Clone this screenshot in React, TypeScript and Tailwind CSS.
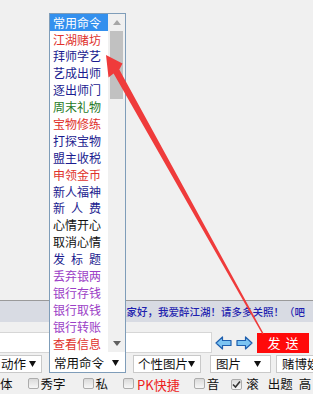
import React from "react";

const menuItems = [
  { t: "常用命令", c: "text-white", active: true },
  { t: "江湖赌坊", c: "text-[#e0322c]" },
  { t: "拜师学艺", c: "text-[#1b1b8f]" },
  { t: "艺成出师", c: "text-[#1b1b8f]" },
  { t: "逐出师门", c: "text-[#1b1b8f]" },
  { t: "周末礼物", c: "text-[#267a26]" },
  { t: "宝物修练", c: "text-[#e0322c]" },
  { t: "打探宝物", c: "text-[#1b1b8f]" },
  { t: "盟主收税", c: "text-[#1b1b8f]" },
  { t: "申领金币", c: "text-[#e0322c]" },
  { t: "新人福神", c: "text-[#1b1b8f]" },
  { t: "新 人 费", c: "text-[#1b1b8f]", spread: true },
  { t: "心情开心", c: "text-[#111111]" },
  { t: "取消心情", c: "text-[#111111]" },
  { t: "发 标 题", c: "text-[#1b1b8f]", spread: true },
  { t: "丢弃银两", c: "text-[#9b3ec6]" },
  { t: "银行存钱", c: "text-[#9b3ec6]" },
  { t: "银行取钱", c: "text-[#9b3ec6]" },
  { t: "银行转账", c: "text-[#9b3ec6]" },
  { t: "查看信息", c: "text-[#e0322c]" },
];

function Caret({ color = "#111" }: { color?: string }) {
  return (
    <svg width="7" height="6" viewBox="0 0 7 6">
      <path d="M0 0 H7 L3.5 6 Z" fill={color} />
    </svg>
  );
}

function Check({ checked }: { checked?: boolean }) {
  return (
    <span className="inline-flex w-[11px] h-[11px] shrink-0 items-center justify-center rounded-[2px] border border-[#acacac] bg-linear-to-b from-[#dadada] to-[#f7f7f7]">
      {checked && (
        <svg width="9" height="9" viewBox="0 0 9 9">
          <path d="M1 4.5 L3.5 7 L8 1.5" stroke="#333" strokeWidth="1.6" fill="none" />
        </svg>
      )}
    </span>
  );
}

function BlueArrow({ dir }: { dir: "l" | "r" }) {
  return (
    <svg width="17" height="14" viewBox="0 0 17 14" className={dir === "r" ? "-scale-x-100" : ""}>
      <path
        d="M1 7 L7.5 1 V4.5 H16 V9.5 H7.5 V13 Z"
        fill="#7cc4f2"
        stroke="#1f5fae"
        strokeWidth="1.2"
        strokeLinejoin="round"
      />
    </svg>
  );
}

function CommandList() {
  return (
    <div className="absolute left-[-1px] bottom-full w-[77px] border border-b-0 border-[#7f9db9] bg-white flex">
      <div className="w-[58px]">
        {menuItems.map((it) => (
          <div
            key={it.t}
            className={`h-[16.9px] flex items-center pl-[3px] text-[12px] leading-none ${it.c} ${
              it.active ? "bg-[#3390ee]" : ""
            }`}
          >
            {it.spread ? (
              <span className="w-[48px] flex justify-between">
                {it.t.split(" ").map((ch) => (
                  <span key={ch}>{ch}</span>
                ))}
              </span>
            ) : (
              it.t
            )}
          </div>
        ))}
      </div>
      <div className="w-[17px] bg-[#f0f0f0] flex flex-col">
        <div className="h-[17px] flex items-center justify-center">
          <svg width="8" height="5" viewBox="0 0 8 5">
            <path d="M0 5 L4 0 L8 5 Z" fill="#a6a6a6" />
          </svg>
        </div>
        <div className="h-[68px] mx-[2px] bg-[#c1c1c1]" />
        <div className="flex-1" />
        <div className="h-[17px] flex items-center justify-center">
          <svg width="8" height="5" viewBox="0 0 8 5">
            <path d="M0 0 L8 0 L4 5 Z" fill="#606060" />
          </svg>
        </div>
      </div>
    </div>
  );
}

export default function App() {
  return (
    <div className="relative w-[313px] h-[394px] overflow-hidden bg-[#f0f0f0] text-[#111] font-['Noto_Sans_CJK_SC','Microsoft_YaHei',sans-serif]">
      <div className="h-[300px]" />

      <div className="h-[22px] border-t border-[#9a9a9a] bg-[#d8dbe3] flex items-center pl-[116px] whitespace-nowrap text-[10.5px] font-medium text-[#1f1faf]">
        大家好，我爱醉江湖！请多多关照！（吧
      </div>

      <div className="h-[10px]" />

      <div className="h-[21px] flex items-center">
        <div className="w-[212px] h-[21px] bg-white border border-[#d6d6d6] border-l-0" />
        <div className="ml-[3px] flex items-center gap-[4px]">
          <BlueArrow dir="l" />
          <BlueArrow dir="r" />
        </div>
        <button className="ml-[4px] w-[52px] h-[20px] bg-[#ff0a0a] text-white text-[13px] leading-none tracking-[5px] pl-[5px]">
          发送
        </button>
      </div>

      <div className="h-[20px] flex items-stretch text-[12.5px] leading-none">
        <div className="w-[42px] mt-[2px] bg-white border border-[#c9c9c9] border-l-0 flex items-center justify-between pl-[1px] pr-[5px]">
          <span>动作</span>
          <Caret />
        </div>
        <div className="relative ml-[7px] -mt-[2px] w-[77px] bg-white border border-[#7f9db9] flex items-center justify-between pl-[4px] pr-[6px] pt-[2px]">
          <CommandList />
          <span>常用命令</span>
          <Caret />
        </div>
        <div className="ml-[7px] w-[68px] mt-[2px] bg-white border border-[#c9c9c9] flex items-center justify-between pl-[4px] pr-[5px]">
          <span>个性图片</span>
          <Caret />
        </div>
        <div className="ml-[9px] w-[61px] mt-[2px] bg-white border border-[#c9c9c9] flex items-center justify-between pl-[5px] pr-[9px]">
          <span>图片</span>
          <Caret />
        </div>
        <div className="ml-[5px] flex-1 mt-[2px] bg-white border border-[#c9c9c9] border-r-0 flex items-center pl-[5px] whitespace-nowrap overflow-hidden">
          <span>赌博娱</span>
        </div>
      </div>

      <div className="h-[22px] flex items-center text-[12.5px] leading-none whitespace-nowrap">
        <span>体</span>
        <span className="ml-[15px]"><Check /></span>
        <span className="ml-[2px]">秀字</span>
        <span className="ml-[17px]"><Check /></span>
        <span className="ml-[2px]">私</span>
        <span className="ml-[15px]"><Check /></span>
        <span className="ml-[3px] text-[13px] text-[#ee2020]">PK快捷</span>
        <span className="ml-[14px]"><Check /></span>
        <span className="ml-[2px]">音</span>
        <span className="ml-[12px]"><Check checked /></span>
        <span className="ml-[4px]">滚</span>
        <span className="ml-[9px]">出题</span>
        <span className="ml-[6px]">高</span>
      </div>

      <svg className="absolute inset-0 pointer-events-none" width="313" height="394" viewBox="0 0 313 394">
        <polygon
          points="106,55 122.5,63.5 119.3,69.5 263.6,333.6 262.4,334.2 113.6,73.5 108.5,77.5"
          fill="#ef3b3b"
        />
      </svg>
    </div>
  );
}
